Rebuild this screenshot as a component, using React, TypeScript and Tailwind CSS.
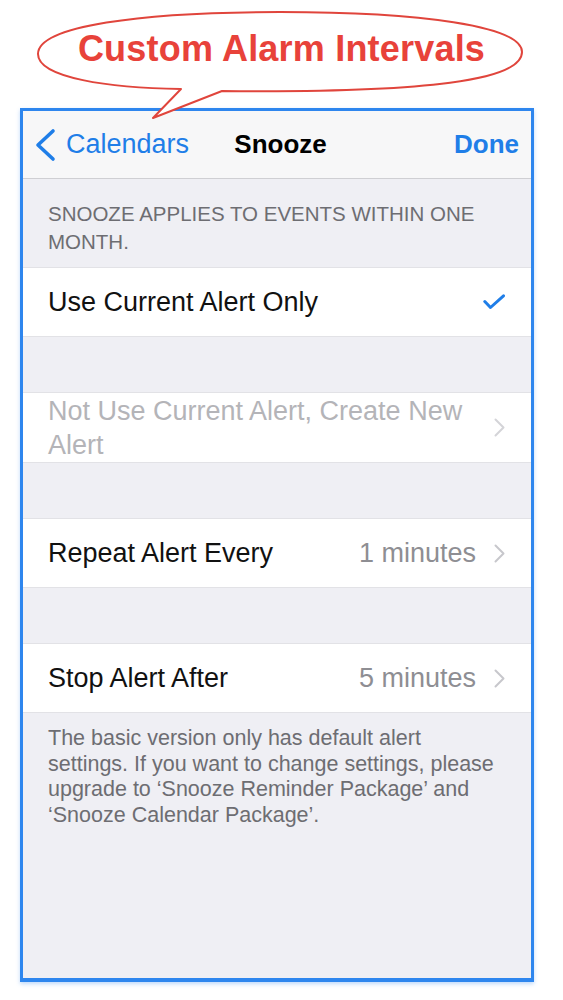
const Chevron = ({ light }: { light?: boolean }) => (
  <svg width="11" height="19" viewBox="0 0 11 19" fill="none" className="shrink-0">
    <path d="M1.5 1.5 L9.5 9.5 L1.5 17.5" stroke={light ? '#d4d4d8' : '#c7c7cc'} strokeWidth="2" strokeLinecap="round" strokeLinejoin="round" />
  </svg>
);

const Row = ({ label, value }: { label: string; value: string }) => (
  <div className="h-[70px] bg-white border-y border-[#e2e2e6] flex items-center pl-[25px] pr-[26px]">
    <span className="flex-1 text-[27px] text-[#111]">{label}</span>
    <span className="text-[27px] text-[#8e8e93] mr-[18px]">{value}</span>
    <Chevron />
  </div>
);

const App = () => {
  return (
    <div className="w-[563px] h-[1000px] bg-white relative font-['Liberation_Sans',Arial,sans-serif]">
      {/* speech bubble */}
      <div className="h-[108px] relative flex justify-center pt-[29px]">
        <svg className="absolute left-0 top-0 z-10 pointer-events-none" width="563" height="130" viewBox="0 0 563 130" fill="none">
          <path
            d="M181 89 L153 118 L222 91 C430 93 522 80 522 52 C522 26 420 12 280 12 C140 12 38 26 38 54 C38 78 110 88 181 89 Z"
            fill="white"
            stroke="#e0453c"
            strokeWidth="2"
            strokeLinejoin="round"
          />
        </svg>
        <span className="relative z-20 text-[36px] leading-[40px] font-bold text-[#e8423a] tracking-[0.2px]">
          Custom Alarm Intervals
        </span>
      </div>

      {/* phone frame */}
      <div className="ml-[20px] w-[514px] h-[874px] border-[3px] border-b-[4px] border-[#2e86ee] bg-[#efeff4] flex flex-col shadow-[0_2px_4px_rgba(46,134,238,0.3)]">
        <div className="h-[68px] shrink-0 bg-[#f7f7f8] border-b border-[#cfcfd3] flex items-center">
          <div className="flex items-center pl-[11px] text-[#1f7ee8] text-[27px]">
            <svg width="24" height="34" viewBox="0 0 24 34" fill="none" className="mr-[8px]">
              <path d="M19 3 L4 17 L19 31" stroke="#1f7ee8" strokeWidth="3.6" strokeLinecap="round" strokeLinejoin="round" />
            </svg>
            Calendars
          </div>
          <div className="flex-1 text-center text-[26px] font-bold text-black pr-[82px]">Snooze</div>
          <div className="pr-[12px] text-[26px] font-bold text-[#1f7ee8]">Done</div>
        </div>

        <div className="pt-[21px] pb-[11px] pl-[25px] pr-[20px] text-[20.5px] leading-[28px] text-[#6d6d72] uppercase">
          Snooze applies to events within one
          <br />
          month.
        </div>

        <div className="h-[70px] bg-white border-y border-[#e2e2e6] flex items-center pl-[25px] pr-[26px]">
          <span className="flex-1 text-[27px] text-[#111]">Use Current Alert Only</span>
          <svg width="22" height="16" viewBox="0 0 22 16" fill="none">
            <path d="M1.8 7.5 L7.5 13.5 L20.5 1.8" stroke="#1f7ee8" strokeWidth="3" strokeLinecap="round" strokeLinejoin="round" />
          </svg>
        </div>

        <div className="h-[55px] shrink-0" />

        <div className="h-[71px] bg-white border-y border-[#e2e2e6] flex items-center pl-[25px] pr-[26px]">
          <span className="flex-1 text-[27px] leading-[34px] text-[#b4b4b8]">
            Not Use Current Alert, Create New
            <br />
            Alert
          </span>
          <Chevron light />
        </div>

        <div className="h-[55px] shrink-0" />

        <Row label="Repeat Alert Every" value="1 minutes" />

        <div className="h-[55px] shrink-0" />

        <Row label="Stop Alert After" value="5 minutes" />

        <div className="pt-[13px] pl-[25px] pr-[20px] text-[21.5px] leading-[25.6px] text-[#6d6d72]">
          The basic version only has default alert
          <br />
          settings. If you want to change settings, please
          <br />
          upgrade to ‘Snooze Reminder Package’ and
          <br />
          ‘Snooze Calendar Package’.
        </div>
      </div>
    </div>
  );
};

export default App;
